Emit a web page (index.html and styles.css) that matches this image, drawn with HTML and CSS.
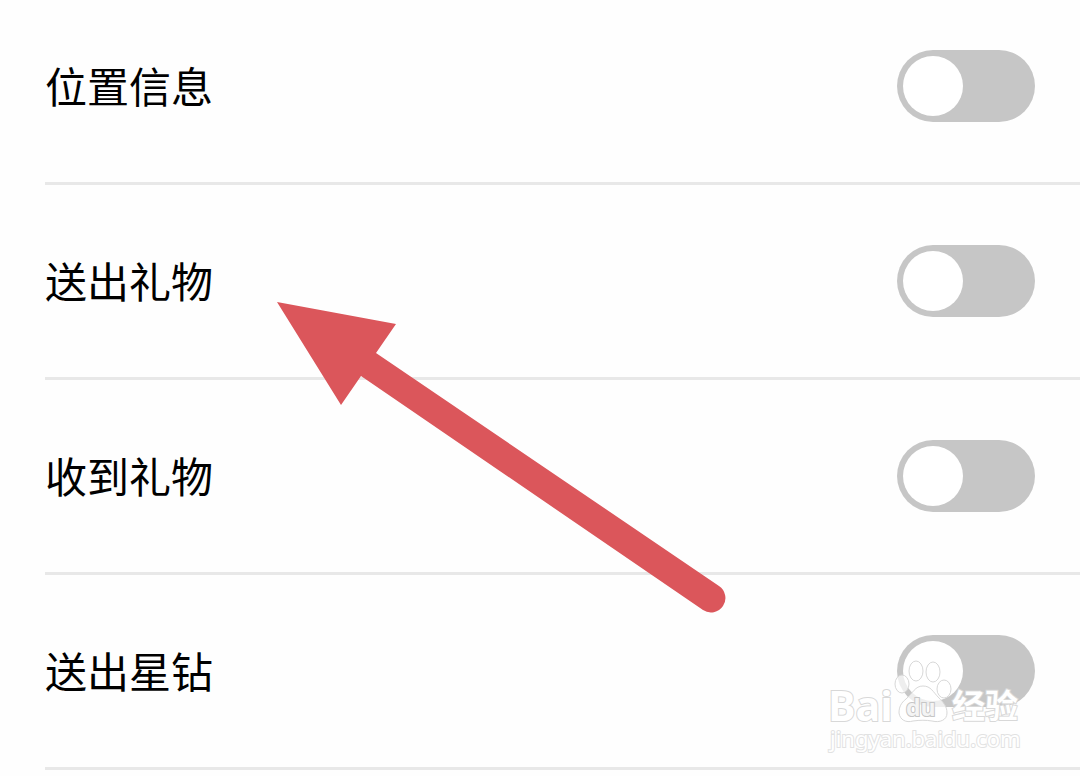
FILE: index.html
```
<!DOCTYPE html>
<html lang="zh-CN">
<head>
  <meta charset="utf-8" />
  <title>隐私设置</title>
  <link rel="stylesheet" href="styles.css">
</head>
<body>
  <div class="page">
    <ul class="list">
      <li class="row">
        <label for="location">位置信息</label>
        <input type="checkbox" class="switch" id="location"/>
      </li>
      <li class="row">
        <label for="gift_sent">送出礼物</label>
        <input type="checkbox" class="switch" id="gift_sent"/>
      </li>
      <li class="row">
        <label for="gift_received">收到礼物</label>
        <input type="checkbox" class="switch" id="gift_received"/>
      </li>
      <li class="row">
        <label for="diamond_sent">送出星钻</label>
        <input type="checkbox" class="switch" id="diamond_sent"/>
      </li>
    </ul>

    <!-- arrow -->
    <svg class="arrow" width="450" height="312" viewBox="0 0 450 312" aria-hidden="true">
      <path d="M0 0 L119 22 L99 51 L442 284 A14 14 0 0 1 426 308 L84 74 L64 103 Z"/>
    </svg>

    <!-- watermark -->
    <svg class="watermark" width="205" height="100" viewBox="0 0 205 100">
      <g class="paw">
        <ellipse cx="77" cy="26" rx="7" ry="9"/>
        <ellipse cx="91" cy="13" rx="7" ry="10"/>
        <ellipse cx="108" cy="14" rx="7" ry="10"/>
        <ellipse cx="119" cy="31" rx="7" ry="9"/>
        <path d="M98 28 C90 28 88 35 81 41 C76 45 74 49 74 55 C75 62 81 65 88 63 C95 62 101 62 107 63 C115 65 122 62 122 55 C122 48 118 44 114 40 C108 34 106 28 98 28 Z"/>
      </g>
      <text class="brand" x="3" y="63">Bai</text>
      <text class="du" x="81" y="58">du</text>
      <text class="jingyan" x="127" y="60">经验</text>
      <text class="site" x="5" y="89">jingyan.baidu.com</text>
    </svg>
  </div>
</body>
</html>
```
FILE: styles.css
```
body {
  margin: 0;
  background-color: #fefefe;
  color: #000;
  font-family: "Noto Sans CJK SC", sans-serif;
}
.page {
  position: relative;
  overflow: hidden;
}
.list {
  margin: 0;
  padding: 0 0 0 45px;
  list-style: none;
}
.row {
  display: flex;
  align-items: center;
  justify-content: space-between;
  padding: 60px 45px 60px 0;
  border-bottom: 3px solid #e8e8e8;
}
.row:first-child {
  padding-top: 50px;
}
.row label {
  padding-bottom: 2px;
  font-size: 42px;
  line-height: 70px;
}
.switch {
  appearance: none;
  width: 138px;
  height: 72px;
  margin: 0;
  padding: 6px;
  box-sizing: border-box;
  border-radius: 36px;
  background-color: #c6c6c6;
}
.switch::before {
  content: "";
  display: block;
  width: 60px;
  height: 60px;
  border-radius: 50%;
  background-color: #fff;
}
.switch:checked {
  background-color: #4cd964;
}
.switch:checked::before {
  margin-left: auto;
}
.arrow {
  position: absolute;
  left: 277px;
  top: 302px;
  fill: #db565b;
  pointer-events: none;
}
.watermark {
  position: absolute;
  right: 50px;
  top: 658px;
  fill: #fff;
  fill-opacity: 0.7;
  stroke: #d8d8d8;
  stroke-width: 1;
  pointer-events: none;
}
.watermark text {
  fill-opacity: 1;
  paint-order: stroke;
  stroke-width: 2;
}
.brand {
  font: bold 41px "Open Sans", sans-serif;
}
.watermark .du {
  font: bold 23px "Open Sans", sans-serif;
  fill: #f4f4f4;
  stroke: #c6c6c6;
}
.jingyan {
  font: bold 33px "Noto Sans CJK SC", sans-serif;
}
.site {
  font: 22px "Noto Sans", sans-serif;
  stroke: #e2e2e2;
}
```
